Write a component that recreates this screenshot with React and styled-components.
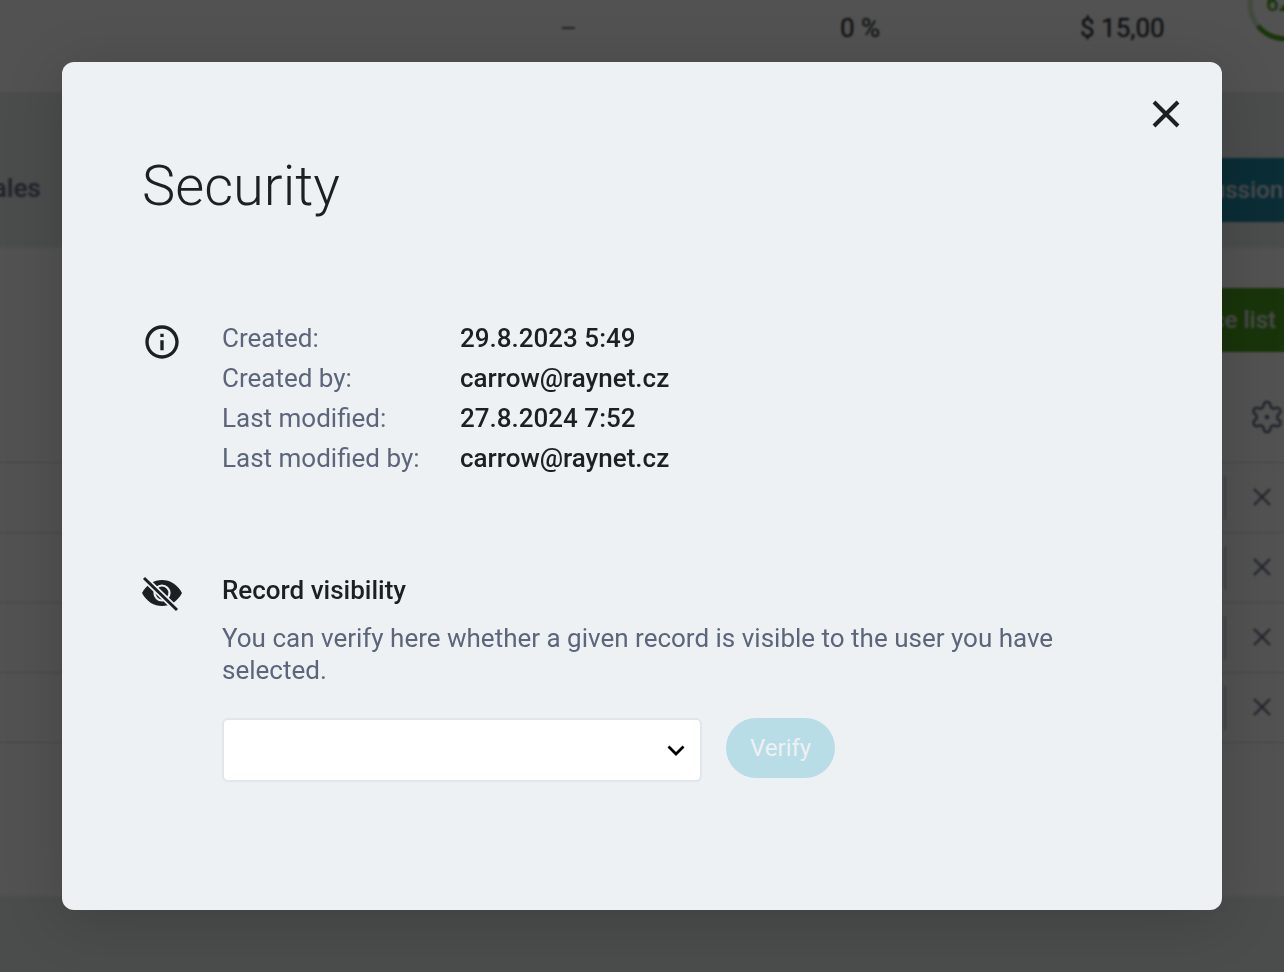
import React from 'react';
import styled, { createGlobalStyle } from 'styled-components';

const GlobalStyle = createGlobalStyle`
  html, body {
    margin: 0;
    height: 100%;
    overflow: hidden;
    background: #dcdfde;
    font-family: Roboto, "Liberation Sans", sans-serif;
    color: #1c1f24;
  }
`;

const Page = styled.div`
  width: 1284px;
  height: 972px;
  overflow: hidden;
`;

const SummaryRow = styled.div`
  display: grid;
  grid-template-columns: 280px 240px 167px 1fr;
  box-sizing: border-box;
  height: 92px;
  padding-left: 560px;
  background: #f0f0f0;
  font-size: 26px;
  line-height: 56px;
`;

const Dash = styled.span`
  color: #5c6579;
`;

const Gauge = styled.svg`
  display: block;
  width: 76px;
  height: 76px;
  margin-top: -34px;
`;

const TabBand = styled.div`
  display: flex;
  justify-content: space-between;
  align-items: flex-start;
  box-sizing: border-box;
  height: 156px;
  padding-top: 66px;
  font-size: 26px;
  font-weight: 500;
  color: #5c6579;
`;

const TabLabel = styled.span`
  margin: 15px 0 0 -23px;
  line-height: 30px;
`;

const PillButton = styled.div`
  display: flex;
  align-items: center;
  height: 64px;
  padding: 0 24px;
  border-radius: 8px;
  font-size: 24px;
  font-weight: 500;
  color: #d8dadf;
  background: ${props => props.color};
  margin-right: ${props => props.offset}px;
`;

const ContentCard = styled.div`
  height: 648px;
  background: #f0f0f0;
`;

const ButtonRow = styled.div`
  display: flex;
  justify-content: flex-end;
  padding-top: 40px;
`;

const ToolRow = styled.div`
  display: flex;
  justify-content: flex-end;
  align-items: center;
  box-sizing: border-box;
  height: 111px;
  padding-top: 20px;
  border-bottom: 1px solid #c8cbd0;
  color: #5c6579;
  svg {
    margin-right: -1px;
  }
`;

const ItemRow = styled.div`
  display: flex;
  align-items: center;
  justify-content: flex-end;
  height: 69px;
  border-bottom: 1px solid #c8cbd0;
`;

const ItemField = styled.div`
  width: 224px;
  height: 44px;
  margin-right: 26px;
  border-right: 2px solid #b9bec8;
`;

const RemoveIcon = styled.svg`
  width: 20px;
  height: 20px;
  margin: 0 12px 2px 0;
`;

const Backdrop = styled.div`
  position: fixed;
  inset: 0;
  background: rgba(0, 0, 0, 0.66);
  backdrop-filter: blur(0.8px);
  z-index: 10;
`;

const Modal = styled.div`
  position: fixed;
  top: 62px;
  left: 62px;
  box-sizing: border-box;
  width: 1160px;
  height: 848px;
  padding: 89px 80px 0;
  border-radius: 12px;
  background: #edf1f4;
  box-shadow: 0 10px 60px rgba(0, 0, 0, 0.16);
  z-index: 11;
`;

const CloseButton = styled.svg`
  position: absolute;
  top: 36px;
  right: 40px;
  width: 32px;
  height: 32px;
`;

const Title = styled.h1`
  margin: 0 0 97px;
  font-size: 56px;
  font-weight: 300;
  line-height: 70px;
  color: #1c1f24;
`;

const Section = styled.section`
  display: flex;
  margin-bottom: ${props => props.gap || 0}px;
`;

const SectionIcon = styled.svg`
  flex: none;
  width: 40px;
  height: 40px;
  margin-top: ${props => props.top || 0}px;
  margin-right: 40px;
`;

const InfoGrid = styled.dl`
  display: grid;
  grid-template-columns: 238px auto;
  margin: 0;
  font-size: 26px;
  line-height: 40px;
`;

const InfoLabel = styled.dt`
  color: #5c6579;
`;

const InfoValue = styled.dd`
  margin: 0;
  font-weight: 500;
  color: #1c1f24;
`;

const SectionBody = styled.div`
  width: 860px;
`;

const SectionTitle = styled.h2`
  margin: 0 0 16px;
  font-size: 26px;
  font-weight: 500;
  line-height: 32px;
  color: #1c1f24;
`;

const Description = styled.p`
  margin: 0 0 32px;
  font-size: 26px;
  line-height: 32px;
  color: #5c6579;
`;

const VerifyRow = styled.div`
  display: flex;
  align-items: flex-start;
  gap: 24px;
`;

const SelectBox = styled.div`
  display: flex;
  justify-content: flex-end;
  align-items: center;
  box-sizing: border-box;
  width: 480px;
  height: 64px;
  padding-right: 12px;
  background: #fff;
  border: 2px solid #e2e5eb;
  border-radius: 6px;
  svg {
    width: 24px;
    height: 24px;
  }
`;

const VerifyButton = styled.button`
  height: 60px;
  padding: 0 24px;
  border: none;
  border-radius: 30px;
  background: #b8dde7;
  color: #edf1f4;
  font-family: inherit;
  font-size: 24px;
  font-weight: 400;
`;

const rows = [1, 2, 3, 4];

const App = () => {
  return (
    <>
      <GlobalStyle />
      <Page>
        <SummaryRow>
          <Dash>–</Dash>
          <span>0 %</span>
          <span>$ 15,00</span>
          <Gauge viewBox="0 0 76 76">
            <circle cx="38" cy="38" r="35" fill="none" stroke="#c4d8b8" strokeWidth="5" />
            <path d="M73 38A35 35 0 0 1 11 60" fill="none" stroke="#4a9a1e" strokeWidth="5" />
            <text x="19" y="45" fontSize="22" fontWeight="500" fill="#4a9a1e">62</text>
          </Gauge>
        </SummaryRow>
        <TabBand>
          <TabLabel>Sales</TabLabel>
          <PillButton color="#1f849f" offset={-23}>Discussion</PillButton>
        </TabBand>
        <ContentCard>
          <ButtonRow>
            <PillButton color="#4a9a1e" offset={-16}>Price list</PillButton>
          </ButtonRow>
          <ToolRow>
            <svg width="36" height="36" viewBox="0 0 24 24" fill="none" stroke="currentColor" strokeWidth="1.6">
              <path d="M12.22 2h-.44a2 2 0 0 0-2 2v.18a2 2 0 0 1-1 1.73l-.43.25a2 2 0 0 1-2 0l-.15-.08a2 2 0 0 0-2.73.73l-.22.38a2 2 0 0 0 .73 2.73l.15.1a2 2 0 0 1 1 1.72v.51a2 2 0 0 1-1 1.74l-.15.09a2 2 0 0 0-.73 2.73l.22.38a2 2 0 0 0 2.73.73l.15-.08a2 2 0 0 1 2 0l.43.25a2 2 0 0 1 1 1.73V20a2 2 0 0 0 2 2h.44a2 2 0 0 0 2-2v-.18a2 2 0 0 1 1-1.73l.43-.25a2 2 0 0 1 2 0l.15.08a2 2 0 0 0 2.73-.73l.22-.39a2 2 0 0 0-.73-2.73l-.15-.08a2 2 0 0 1-1-1.74v-.5a2 2 0 0 1 1-1.74l.15-.09a2 2 0 0 0 .73-2.73l-.22-.38a2 2 0 0 0-2.73-.73l-.15.08a2 2 0 0 1-2 0l-.43-.25a2 2 0 0 1-1-1.73V4a2 2 0 0 0-2-2z" />
              <circle cx="12" cy="12" r="1.5" fill="currentColor" stroke="none" />
            </svg>
          </ToolRow>
          {rows.map(row => (
            <ItemRow key={row}>
              <ItemField />
              <RemoveIcon viewBox="0 0 20 20" fill="none" stroke="#5c6579" strokeWidth="2">
                <path d="M2 2l16 16M18 2L2 18" />
              </RemoveIcon>
            </ItemRow>
          ))}
        </ContentCard>
      </Page>
      <Backdrop />
      <Modal>
        <CloseButton viewBox="0 0 32 32" fill="none" stroke="#1c1f24" strokeWidth="4">
          <path d="M4 4l24 24M28 4L4 28" />
        </CloseButton>
        <Title>Security</Title>
        <Section gap={96}>
          <SectionIcon top={4} viewBox="0 0 24 24" fill="#1c1f24">
            <path d="M11 7h2v2h-2zm0 4h2v6h-2zm1-9C6.48 2 2 6.48 2 12s4.48 10 10 10 10-4.48 10-10S17.52 2 12 2zm0 18c-4.41 0-8-3.59-8-8s3.59-8 8-8 8 3.59 8 8-3.59 8-8 8z" />
          </SectionIcon>
          <InfoGrid>
            <InfoLabel>Created:</InfoLabel>
            <InfoValue>29.8.2023 5:49</InfoValue>
            <InfoLabel>Created by:</InfoLabel>
            <InfoValue>carrow@raynet.cz</InfoValue>
            <InfoLabel>Last modified:</InfoLabel>
            <InfoValue>27.8.2024 7:52</InfoValue>
            <InfoLabel>Last modified by:</InfoLabel>
            <InfoValue>carrow@raynet.cz</InfoValue>
          </InfoGrid>
        </Section>
        <Section>
          <SectionIcon viewBox="0 0 40 40">
            <path d="M0 19C5 10 12 6 20 6s15 4 20 13c-5 9-12 13-20 13S5 28 0 19z" fill="#1c1f24" />
            <circle cx="20" cy="19" r="7.5" fill="none" stroke="#edf1f4" strokeWidth="2.2" />
            <path d="M2 4l33 32" stroke="#edf1f4" strokeWidth="6.5" />
            <path d="M2 4l33 32" stroke="#1c1f24" strokeWidth="3" />
          </SectionIcon>
          <SectionBody>
            <SectionTitle>Record visibility</SectionTitle>
            <Description>
              You can verify here whether a given record is visible to the user you have selected.
            </Description>
            <VerifyRow>
              <SelectBox>
                <svg viewBox="0 0 24 24" fill="none" stroke="#000" strokeWidth="2.8">
                  <path d="M4.5 8.5l7.5 7.5 7.5-7.5" />
                </svg>
              </SelectBox>
              <VerifyButton>Verify</VerifyButton>
            </VerifyRow>
          </SectionBody>
        </Section>
      </Modal>
    </>
  );
};

export default App;
